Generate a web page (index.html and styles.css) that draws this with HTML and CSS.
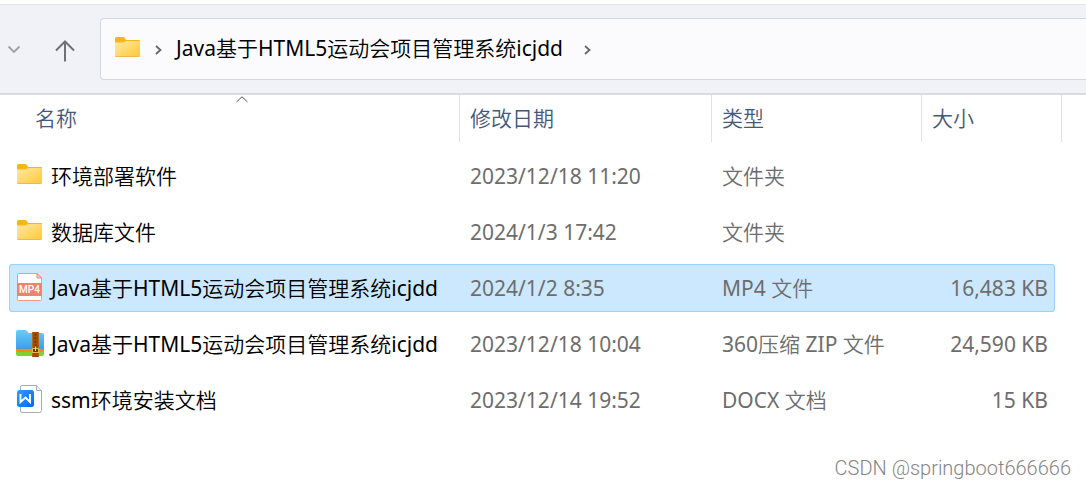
FILE: index.html
```html
<!DOCTYPE html>
<html lang="zh-CN">
<head>
	<meta charset="utf-8">
	<meta name="viewport" content="width=device-width, initial-scale=1">
	<title>Java基于HTML5运动会项目管理系统icjdd</title>
	<link rel="stylesheet" href="styles.css">
</head>
<body>
	<!-- shared icons -->
	<svg class="defs" width="0" height="0">
		<defs>
			<linearGradient id="folder-fill" x1="0" y1="0" x2="1" y2="1">
				<stop offset="0" stop-color="#ffe9a6"/>
				<stop offset="1" stop-color="#ffc834"/>
			</linearGradient>
			<linearGradient id="zip-fill" x1="0" y1="0" x2="0" y2="1">
				<stop offset="0" stop-color="#6ccbfb"/>
				<stop offset="1" stop-color="#399fe8"/>
			</linearGradient>
			<linearGradient id="word-fill" x1="0" y1="0" x2="1" y2="1">
				<stop offset="0" stop-color="#2ea0ff"/>
				<stop offset="1" stop-color="#0a62fa"/>
			</linearGradient>
			<symbol id="folder" viewBox="0 0 26 20">
				<path d="M0 1.5Q0 0 1.5 0H9L11 3H24Q25 3 25 4V10H0Z" fill="#f9b51a"/>
				<path d="M0 5.5H8.5L11 4H24Q25 4 25 5V18.5Q25 20 23.5 20H1.5Q0 20 0 18.5Z" fill="url(#folder-fill)"/>
				<path d="M.5 19.5H24.5" stroke="#eebb4a" stroke-width="1"/>
			</symbol>
		</defs>
	</svg>

	<div class="toolbar">
		<button class="nav-btn recent" aria-label="最近浏览的位置">
			<svg width="14" height="9" viewBox="0 0 14 9"><path d="M1.5 1.5L7 7L12.5 1.5" fill="none" stroke="#a0a1a5" stroke-width="1.8"/></svg>
		</button>
		<button class="nav-btn up" aria-label="向上">
			<svg width="20" height="22" viewBox="0 0 20 22"><path d="M10 21.5V1.5M1 10.5L10 1.5L19 10.5" fill="none" stroke="#707174" stroke-width="2"/></svg>
		</button>
		<div class="address">
			<svg class="folder" width="26" height="20"><use href="#folder"/></svg>
			<svg class="sep" width="7" height="10" viewBox="0 0 7 10"><path d="M1 1L5.5 5L1 9" fill="none" stroke="#66676a" stroke-width="1.8"/></svg>
			<button class="crumb">Java基于HTML5运动会项目管理系统icjdd</button>
			<svg class="sep" width="7" height="10" viewBox="0 0 7 10"><path d="M1 1L5.5 5L1 9" fill="none" stroke="#66676a" stroke-width="1.8"/></svg>
		</div>
	</div>

	<div class="files">
		<table>
			<colgroup>
				<col>
				<col class="col-date">
				<col class="col-type">
				<col class="col-size">
				<col class="col-end">
			</colgroup>
			<thead>
				<tr>
					<th aria-sort="ascending">
						<div class="head first">名称
							<svg class="sort" width="12" height="7" viewBox="0 0 12 7"><path d="M.5 6L6 .8L11.5 6" fill="none" stroke="#555" stroke-width="1"/></svg>
						</div>
					</th>
					<th><div class="head">修改日期</div></th>
					<th><div class="head">类型</div></th>
					<th colspan="2"><div class="head last">大小</div></th>
				</tr>
			</thead>
			<tbody>
				<tr>
					<td><div class="name"><svg class="icon" width="28" height="28" viewBox="0 0 28 28"><use href="#folder" x="1" y="3" width="26" height="20"/></svg>环境部署软件</div></td>
					<td>2023/12/18 11:20</td>
					<td>文件夹</td>
					<td class="size"></td>
				</tr>
				<tr>
					<td><div class="name"><svg class="icon" width="28" height="28" viewBox="0 0 28 28"><use href="#folder" x="1" y="3" width="26" height="20"/></svg>数据库文件</div></td>
					<td>2024/1/3 17:42</td>
					<td>文件夹</td>
					<td class="size"></td>
				</tr>
				<tr class="selected">
					<td><div class="name">
						<svg class="icon" width="28" height="28" viewBox="0 0 28 28">
							<path d="M2.5 .5H21L25.5 5V26.5Q25.5 27.5 24.5 27.5H2.5Q1.5 27.5 1.5 26.5V1.5Q1.5 .5 2.5 .5Z" fill="#fff" stroke="#f29a84"/>
							<path d="M21 .5V5H25.5Z" fill="#fbd9d0" stroke="#f0836a"/>
							<rect x="1" y="10" width="25" height="13" fill="#f0836a"/>
							<text x="13.5" y="20" class="badge" text-anchor="middle">MP4</text>
						</svg>Java基于HTML5运动会项目管理系统icjdd</div></td>
					<td>2024/1/2 8:35</td>
					<td>MP4 文件</td>
					<td class="size">16,483 KB</td>
				</tr>
				<tr>
					<td><div class="name">
						<svg class="icon" width="28" height="28" viewBox="0 0 28 28">
							<path d="M0 19H28V25Q28 27 26 27H2Q0 27 0 25Z" fill="#83d02c"/>
							<path d="M0 18H28V21Q28 23 26 23H2Q0 23 0 21Z" fill="#ff8a00"/>
							<path d="M0 3Q0 1 2 1H9Q10.5 1 11.5 2.5L12.5 4H26Q28 4 28 6V18.5Q28 20 26 20H2Q0 20 0 18.5Z" fill="url(#zip-fill)"/>
							<rect x="16" y="3" width="7" height="25" fill="#9b4d10"/>
							<path d="M16.5 3V28M22.5 3V28" stroke="#b3651d"/>
							<path d="M19.5 5V17" stroke="#6b350c" stroke-width="1.5" stroke-dasharray="1.5 2"/>
							<rect x="16.5" y="19.5" width="6" height="4" fill="#743309" stroke="#e8b45b"/>
							<path d="M19.5 17.5V22" stroke="#ffe09b"/>
						</svg>Java基于HTML5运动会项目管理系统icjdd</div></td>
					<td>2023/12/18 10:04</td>
					<td>360压缩 ZIP 文件</td>
					<td class="size">24,590 KB</td>
				</tr>
				<tr>
					<td><div class="name">
						<svg class="icon" width="28" height="28" viewBox="0 0 28 28">
							<path d="M6 .5H20.5L25.5 5.5V25.5Q25.5 27.5 23.5 27.5H6Q4.5 27.5 4.5 26V2Q4.5 .5 6 .5Z" fill="#fff" stroke="#a5abb8"/>
							<path d="M20.5 .5V5.5H25.5" fill="#eef0f4" stroke="#a5abb8"/>
							<rect x="1" y="5" width="17" height="17" rx="2.5" fill="url(#word-fill)"/>
							<path d="M4.5 9V17L9.5 12.5L14 17V9" fill="none" stroke="#fff" stroke-width="1.9"/>
						</svg>ssm环境安装文档</div></td>
					<td>2023/12/14 19:52</td>
					<td>DOCX 文档</td>
					<td class="size">15 KB</td>
				</tr>
			</tbody>
		</table>
	</div>

	<div class="watermark">CSDN @springboot666666</div>
</body>
</html>
```
FILE: styles.css
```css
* {
	box-sizing: border-box;
}

body {
	margin: 0;
	padding-top: 4px;
	background: #fff;
	color: #000;
	font-family: "Noto Sans", "Noto Sans CJK SC DemiLight", "Noto Sans CJK SC Light", "Noto Sans CJK SC", sans-serif;
	font-size: 21px;
	line-height: 28px;
}

svg {
	display: block;
	flex: none;
}

.defs {
	position: absolute;
}

button {
	padding: 0;
	border: none;
	background: none;
	color: inherit;
	font: inherit;
	cursor: pointer;
}

.toolbar {
	display: flex;
	align-items: center;
	padding: 13px 0 13px 7px;
	background: #f1f2f8;
	border-top: 1px solid #e5e5e8;
	border-bottom: 2px solid #dadbe1;
}

.nav-btn.up {
	margin: 0 25px 0 34px;
	padding-top: 4px;
}

.address {
	display: flex;
	flex: 1;
	align-items: center;
	height: 62px;
	padding-left: 14px;
	background: #fbfbfe;
	border: 1px solid #d6d7dc;
	border-right: none;
	border-radius: 4px 0 0 4px;
	white-space: nowrap;
}

.address .folder {
	margin: 0 14px 4px 0;
}

.address .sep {
	margin-top: 2px;
}

.crumb {
	margin: 0 21px 2px 14px;
}

.files {
	padding: 0 24px 0 9px;
}

table {
	width: 100%;
	margin-top: -8px;
	table-layout: fixed;
	border-collapse: separate;
	border-spacing: 0 8px;
}

.col-date {
	width: 252px;
}

.col-type {
	width: 210px;
}

.col-size {
	width: 134px;
}

.col-end {
	width: 7px;
}

th {
	padding: 0 0 2px;
	color: #44597a;
	font-weight: normal;
	text-align: left;
}

.head {
	position: relative;
	height: 47px;
	padding: 9px 10px;
	border-left: 1px solid #e2e2e2;
}

.head.first {
	padding-left: 26px;
	border-left: none;
}

.head.last {
	border-right: 1px solid #e2e2e2;
}

.sort {
	position: absolute;
	top: 1px;
	right: 211px;
}

td {
	height: 48px;
	padding: 0 0 0 11px;
	border: 1px solid transparent;
	border-width: 1px 0;
	color: #6d6d6d;
	white-space: nowrap;
}

td:first-child {
	padding-left: 6px;
	border-left-width: 1px;
	border-radius: 3px 0 0 3px;
	color: #000;
}

td.size {
	padding-right: 6px;
	border-right-width: 1px;
	border-radius: 0 3px 3px 0;
	text-align: right;
}

.selected td {
	background: #cce8ff;
	border-color: #99d1ff;
}

.name {
	display: flex;
	align-items: center;
}

.icon {
	margin: 0 7px 2px 0;
}

.badge {
	fill: #fff;
	font-family: Roboto, sans-serif;
	font-size: 10px;
	font-weight: 500;
}

.watermark {
	margin-top: 22px;
	padding-right: 15px;
	color: #858585;
	font-family: Roboto, sans-serif;
	font-size: 20px;
	font-weight: 300;
	text-align: right;
}
```
